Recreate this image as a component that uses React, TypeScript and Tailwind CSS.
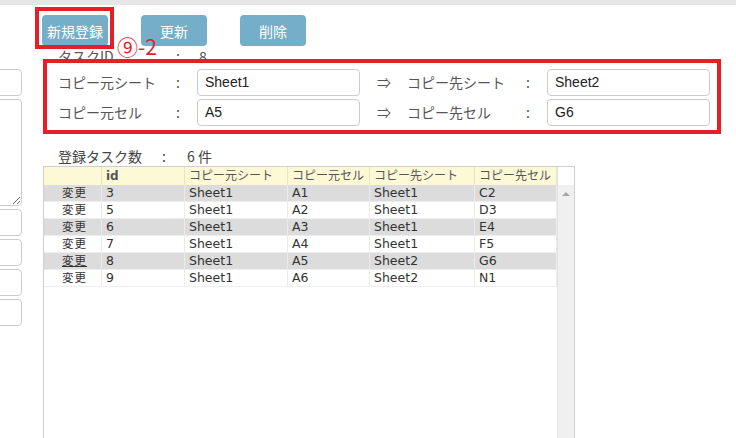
import React from 'react';

const rows = [
    { id: 3, srcSheet: 'Sheet1', srcCell: 'A1', dstSheet: 'Sheet1', dstCell: 'C2' },
    { id: 5, srcSheet: 'Sheet1', srcCell: 'A2', dstSheet: 'Sheet1', dstCell: 'D3' },
    { id: 6, srcSheet: 'Sheet1', srcCell: 'A3', dstSheet: 'Sheet1', dstCell: 'E4' },
    { id: 7, srcSheet: 'Sheet1', srcCell: 'A4', dstSheet: 'Sheet1', dstCell: 'F5' },
    { id: 8, srcSheet: 'Sheet1', srcCell: 'A5', dstSheet: 'Sheet2', dstCell: 'G6' },
    { id: 9, srcSheet: 'Sheet1', srcCell: 'A6', dstSheet: 'Sheet2', dstCell: 'N1' },
];

const jp = { fontFamily: '"Noto Sans CJK JP", "Liberation Sans", sans-serif' };
const cellFont = { fontFamily: '"DejaVu Sans", "Noto Sans CJK JP", sans-serif' };

function Field({ value }: { value: string }) {
    return (
        <div
            className="w-[163px] h-[27px] border border-[#cccccc] rounded-[4px] px-[7px] flex items-center text-[14px] text-[#222]"
            style={{ fontFamily: '"Liberation Sans", Arial, sans-serif' }}
        >
            {value}
        </div>
    );
}

function CopyRow({ src, srcVal, dst, dstVal }: { src: string; srcVal: string; dst: string; dstVal: string }) {
    return (
        <div className="flex items-center h-[27px] text-[14px] text-[#555]" style={jp}>
            <span className="w-[118px]">{src}</span>
            <span className="w-[21px]">:</span>
            <Field value={srcVal} />
            <span className="w-[30px] ml-[17px]">⇒</span>
            <span className="w-[119px]">{dst}</span>
            <span className="w-[21px]">:</span>
            <Field value={dstVal} />
        </div>
    );
}

export default function App() {
    const cols = ['w-[58px]', 'w-[83px]', 'w-[103px]', 'w-[82px]', 'w-[105px]', 'w-[82px]'];

    return (
        <div className="relative w-[736px] h-[438px] overflow-hidden bg-white">
            <div className="h-[5px] bg-[#e6e6e6]" />

            <div className="flex h-[433px]">
                {/* left edge of the side form, mostly off screen */}
                <div className="w-[22px] overflow-hidden pt-[64px] flex flex-col gap-[3px]">
                    <div className="w-[200px] -ml-[178px] h-[27px] border border-[#cccccc] rounded-[4px] bg-white" />
                    <textarea className="w-[200px] -ml-[178px] h-[107px] border border-[#cccccc] rounded-[4px] bg-white block" />
                    <div className="w-[200px] -ml-[178px] h-[27px] border border-[#cccccc] rounded-[4px] bg-white" />
                    <div className="w-[200px] -ml-[178px] h-[27px] border border-[#cccccc] rounded-[4px] bg-white" />
                    <div className="w-[200px] -ml-[178px] h-[27px] border border-[#cccccc] rounded-[4px] bg-white" />
                    <div className="w-[200px] -ml-[178px] h-[27px] border border-[#cccccc] rounded-[4px] bg-white" />
                </div>

                <div className="ml-[20px] flex flex-col">
                    {/* Buttons */}
                    <div className="flex gap-[33px] mt-[10px]" style={jp}>
                        {['新規登録', '更新', '削除'].map(label => (
                            <button key={label} className="w-[66px] h-[31px] rounded-[4px] bg-[#75aec8] text-white text-[14px] leading-none">
                                {label}
                            </button>
                        ))}
                    </div>

                    <div className="h-[13px] pt-[3px] pl-[16px] flex text-[14px] leading-[14px] text-[#555]" style={jp}>
                        <span className="w-[118px]">タスクID</span>
                        <span className="w-[23px]">:</span>
                        <span>8</span>
                    </div>

                    {/* Copy settings */}
                    <div className="relative z-10 ml-px w-[678px] border-4 border-[#e3202a] bg-white pt-[6px] pb-[4px] pl-[11px] flex flex-col gap-[3px]">
                        <CopyRow src="コピー元シート" srcVal="Sheet1" dst="コピー先シート" dstVal="Sheet2" />
                        <CopyRow src="コピー元セル" srcVal="A5" dst="コピー先セル" dstVal="G6" />
                    </div>

                    <div className="mt-[12px] h-[20px] pl-[16px] flex items-center text-[14px] text-[#444]" style={jp}>
                        <span className="w-[104px]">登録タスク数</span>
                        <span className="w-[25px]">:</span>
                        <span>6 件</span>
                    </div>

                    {/* Table */}
                    <div className="ml-px w-[532px] flex-1 flex border-l border-r border-t border-[#cfcfcf]">
                        <div className="w-[513px]">
                            <div className="flex h-[18px] bg-[#fdf8d6] text-[12px] leading-none text-[#555]" style={cellFont}>
                                {['', 'id', 'コピー元シート', 'コピー元セル', 'コピー先シート', 'コピー先セル'].map((h, i) => (
                                    <div key={i} className={`${cols[i]} border-r border-[#e8e4c8] px-[4px] flex items-center ${i === 1 ? 'font-bold' : ''}`}>
                                        {h}
                                    </div>
                                ))}
                            </div>
                            {rows.map((r, idx) => (
                                <div
                                    key={r.id}
                                    className={`flex h-[17px] text-[12.5px] leading-none text-[#333] border-b border-[#eeeeee] ${idx % 2 === 0 ? 'bg-[#dcdcdc]' : 'bg-white'}`}
                                    style={cellFont}
                                >
                                    <div className={`${cols[0]} border-r border-[#ebebeb] flex items-center justify-center pl-[4px]`}>
                                        <span className={`text-[11.5px] tracking-[1px] ${r.id === 8 ? 'underline' : ''}`} style={jp}>変更</span>
                                    </div>
                                    {[String(r.id), r.srcSheet, r.srcCell, r.dstSheet, r.dstCell].map((v, i) => (
                                        <div key={i} className={`${cols[i + 1]} border-r border-[#ebebeb] px-[4px] flex items-center`}>
                                            {v}
                                        </div>
                                    ))}
                                </div>
                            ))}
                        </div>
                        {/* scrollbar */}
                        <div className="w-[18px] flex flex-col border-l border-[#e2e2e2]">
                            <div className="h-[18px] bg-white" />
                            <div className="flex-1 bg-[#f0f0f0] flex justify-center pt-[7px]">
                                <div className="w-0 h-0 border-l-[4px] border-r-[4px] border-b-[4px] border-l-transparent border-r-transparent border-b-[#a6a6a6]" />
                            </div>
                        </div>
                    </div>
                </div>
            </div>

            {/* annotations */}
            <div className="absolute left-[35px] top-[7px] w-[79px] h-[42px] border-4 border-[#e3202a]" />
            <div className="absolute left-[117px] top-[33px] text-[21px] leading-[26px] text-[#e3202a]" style={jp}>
                ⑨-2
            </div>
        </div>
    );
}
